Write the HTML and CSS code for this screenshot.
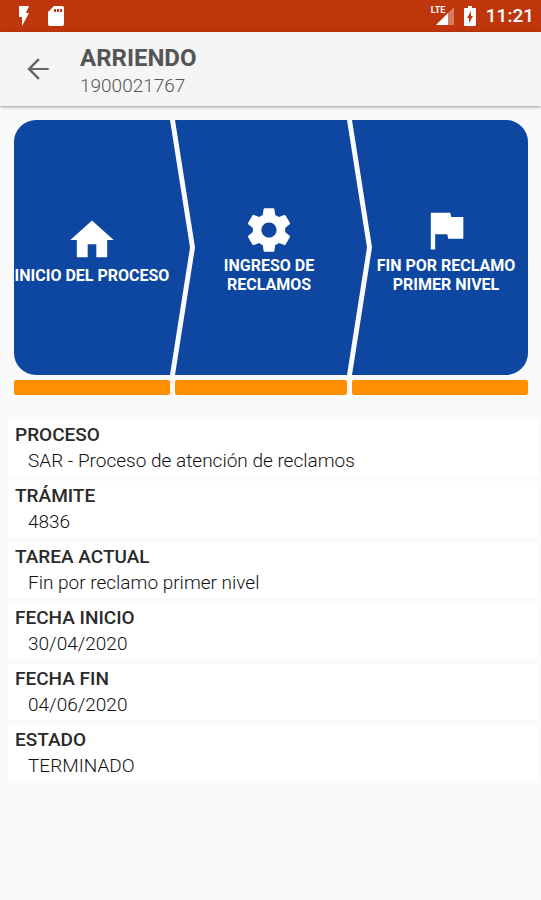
FILE: index.html
```html
<!DOCTYPE html>
<html lang="es">
<head>
    <meta charset="UTF-8">
    <meta name="viewport" content="width=device-width, initial-scale=1.0">
    <title>Arriendo</title>
    <link rel="stylesheet" href="styles.css">
</head>
<body>
    <div class="status-bar">
        <svg class="bolt" viewBox="0 0 10 20"><path d="M0 0h10L7 7h3L3 20V11H0z"/></svg>
        <svg class="sd-card" viewBox="0 0 16 20"><path fill-rule="evenodd" d="M6 0h8a2 2 0 0 1 2 2v16a2 2 0 0 1-2 2H2a2 2 0 0 1-2-2V6zM6 3v3h2V3zM9 3v3h2V3zM12 3v3h2V3z"/></svg>
        <div class="status-right">
            <div class="signal">
                <span class="network">LTE</span>
                <svg viewBox="0 0 18 18"><path opacity=".35" d="M18 0v18h-6V6z"/><path d="M12 6v12H0z"/></svg>
            </div>
            <svg class="battery" viewBox="0 0 12 20"><path fill-rule="evenodd" d="M4 0h4v2h3a1 1 0 0 1 1 1v16a1 1 0 0 1-1 1H1a1 1 0 0 1-1-1V3a1 1 0 0 1 1-1h3zM7 5l-4 7h2v5l4-7H7z"/></svg>
            <span class="time">11:21</span>
        </div>
    </div>

    <header class="toolbar">
        <button class="back" aria-label="Volver">
            <svg viewBox="0 0 24 24"><path d="M20 11.2H7.4l5.9-5.9L12 4l-8 8 8 8 1.3-1.3-5.9-5.9H20z"/></svg>
        </button>
        <div class="heading">
            <h1>ARRIENDO</h1>
            <p>1900021767</p>
        </div>
    </header>

    <main>
        <div class="process">
            <div class="step first">
                <svg viewBox="0 0 24 24"><path d="M10 20v-6h4v6h5v-8h3L12 3 2 12h3v8z"/></svg>
                <span>INICIO DEL PROCESO</span>
            </div>
            <div class="step middle">
                <svg viewBox="0 0 24 24"><path d="M19.43 12.98c.04-.32.07-.64.07-.98s-.03-.66-.07-.98l2.11-1.65c.19-.15.24-.42.12-.64l-2-3.46c-.12-.22-.39-.3-.61-.22l-2.49 1c-.52-.4-1.08-.73-1.69-.98l-.38-2.65C14.46 2.18 14.25 2 14 2h-4c-.25 0-.46.18-.49.42l-.38 2.65c-.61.25-1.17.59-1.69.98l-2.49-1c-.23-.09-.49 0-.61.22l-2 3.46c-.13.22-.07.49.12.64l2.11 1.65c-.04.32-.07.65-.07.98s.03.66.07.98l-2.11 1.65c-.19.15-.24.42-.12.64l2 3.46c.12.22.39.3.61.22l2.49-1c.52.4 1.08.73 1.69.98l.38 2.65c.03.24.24.42.49.42h4c.25 0 .46-.18.49-.42l.38-2.65c.61-.25 1.17-.59 1.69-.98l2.49 1c.23.09.49 0 .61-.22l2-3.46c.12-.22.07-.49-.12-.64l-2.11-1.65zM12 15.5c-1.93 0-3.5-1.57-3.5-3.5s1.57-3.5 3.5-3.5 3.5 1.57 3.5 3.5-1.57 3.5-3.5 3.5z"/></svg>
                <span>INGRESO DE<br>RECLAMOS</span>
            </div>
            <div class="step last">
                <svg viewBox="0 0 24 24"><path d="M14.4 6L14 4H5v17h2v-7h5.6l.4 2h7V6z"/></svg>
                <span>FIN POR RECLAMO<br>PRIMER NIVEL</span>
            </div>
            <div class="bar"></div>
            <div class="bar"></div>
            <div class="bar"></div>
        </div>

        <dl class="details">
            <div class="row">
                <dt>PROCESO</dt>
                <dd>SAR - Proceso de atención de reclamos</dd>
            </div>
            <div class="row">
                <dt>TRÁMITE</dt>
                <dd>4836</dd>
            </div>
            <div class="row">
                <dt>TAREA ACTUAL</dt>
                <dd>Fin por reclamo primer nivel</dd>
            </div>
            <div class="row">
                <dt>FECHA INICIO</dt>
                <dd>30/04/2020</dd>
            </div>
            <div class="row">
                <dt>FECHA FIN</dt>
                <dd>04/06/2020</dd>
            </div>
            <div class="row">
                <dt>ESTADO</dt>
                <dd>TERMINADO</dd>
            </div>
        </dl>
    </main>
</body>
</html>
```

FILE: styles.css
```css
* {
    box-sizing: border-box;
}

body {
    margin: 0;
    min-height: 100vh;
    background: #fafafa;
    color: #2a2a2a;
    font-family: Roboto, "Liberation Sans", sans-serif;
}

svg {
    display: block;
    fill: currentColor;
}

/* Status bar */
.status-bar {
    display: flex;
    align-items: center;
    height: 32px;
    padding: 0 7px 0 19px;
    background: #bf360c;
    color: #fff;
}

.bolt {
    width: 10px;
    height: 20px;
    margin-right: 19px;
}

.sd-card {
    width: 16px;
    height: 20px;
}

.status-right {
    display: flex;
    align-items: center;
    gap: 10px;
    margin-left: auto;
}

.signal {
    position: relative;
}

.signal svg {
    width: 18px;
    height: 18px;
}

.network {
    position: absolute;
    top: -1px;
    left: -5px;
    font-size: 9px;
    line-height: 9px;
    font-weight: 700;
}

.battery {
    width: 12px;
    height: 20px;
}

.time {
    font-size: 19px;
    line-height: 24px;
    font-weight: 500;
}

/* Toolbar */
.toolbar {
    display: flex;
    align-items: center;
    gap: 26px;
    height: 74px;
    padding: 0 22px;
    background: #f5f5f5;
    color: #555;
    box-shadow: 0 1px 3px rgba(0, 0, 0, 0.4);
}

.back {
    padding: 0;
    border: none;
    background: none;
    color: #666;
    cursor: pointer;
}

.back svg {
    width: 32px;
    height: 32px;
}

.heading {
    padding-top: 3px;
}

.toolbar h1 {
    margin: 0;
    font-size: 24px;
    line-height: 30px;
    font-weight: 700;
}

.toolbar p {
    margin: 0;
    color: #555;
    font-size: 19px;
    line-height: 26px;
    font-weight: 300;
}

/* Process steps */
.process {
    display: grid;
    grid-template-columns: 156fr 172fr 176fr;
    gap: 5px;
    margin: 14px 13px 0 14px;
}

.step {
    position: relative;
    z-index: 0;
    display: flex;
    flex-direction: column;
    align-items: center;
    justify-content: center;
    min-height: 255px;
    padding-top: 3px;
    color: #fff;
    font-size: 16px;
    line-height: 19px;
    font-weight: 700;
    text-align: center;
    white-space: nowrap;
}

.step::before {
    content: '';
    position: absolute;
    z-index: -1;
    inset: 0 -20px 0 0;
    background: #0d47a1;
}

.step svg {
    width: 52px;
    height: 52px;
}

.first::before {
    border-radius: 22px 0 0 22px;
    clip-path: polygon(0 0, calc(100% - 20px) 0, 100% 50%, calc(100% - 20px) 100%, 0 100%);
}

.middle {
    padding-left: 16px;
}

.middle::before {
    clip-path: polygon(0 0, calc(100% - 20px) 0, 100% 50%, calc(100% - 20px) 100%, 0 100%, 20px 50%);
}

.last {
    padding-left: 12px;
}

.last::before {
    right: 0;
    border-radius: 0 22px 22px 0;
    clip-path: polygon(0 0, 100% 0, 100% 100%, 0 100%, 20px 50%);
}

.bar {
    height: 15px;
    border-radius: 2px;
    background: #ff8f00;
}

/* Details */
.details {
    display: flex;
    flex-direction: column;
    gap: 5px;
    margin: 25px 2px 0 8px;
}

.row {
    padding: 2px 7px;
    background: #fff;
}

dt {
    font-size: 19px;
    line-height: 26px;
    font-weight: 500;
}

dd {
    margin: 0 0 0 13px;
    color: #111;
    font-size: 19px;
    line-height: 26px;
    font-weight: 300;
}
```
